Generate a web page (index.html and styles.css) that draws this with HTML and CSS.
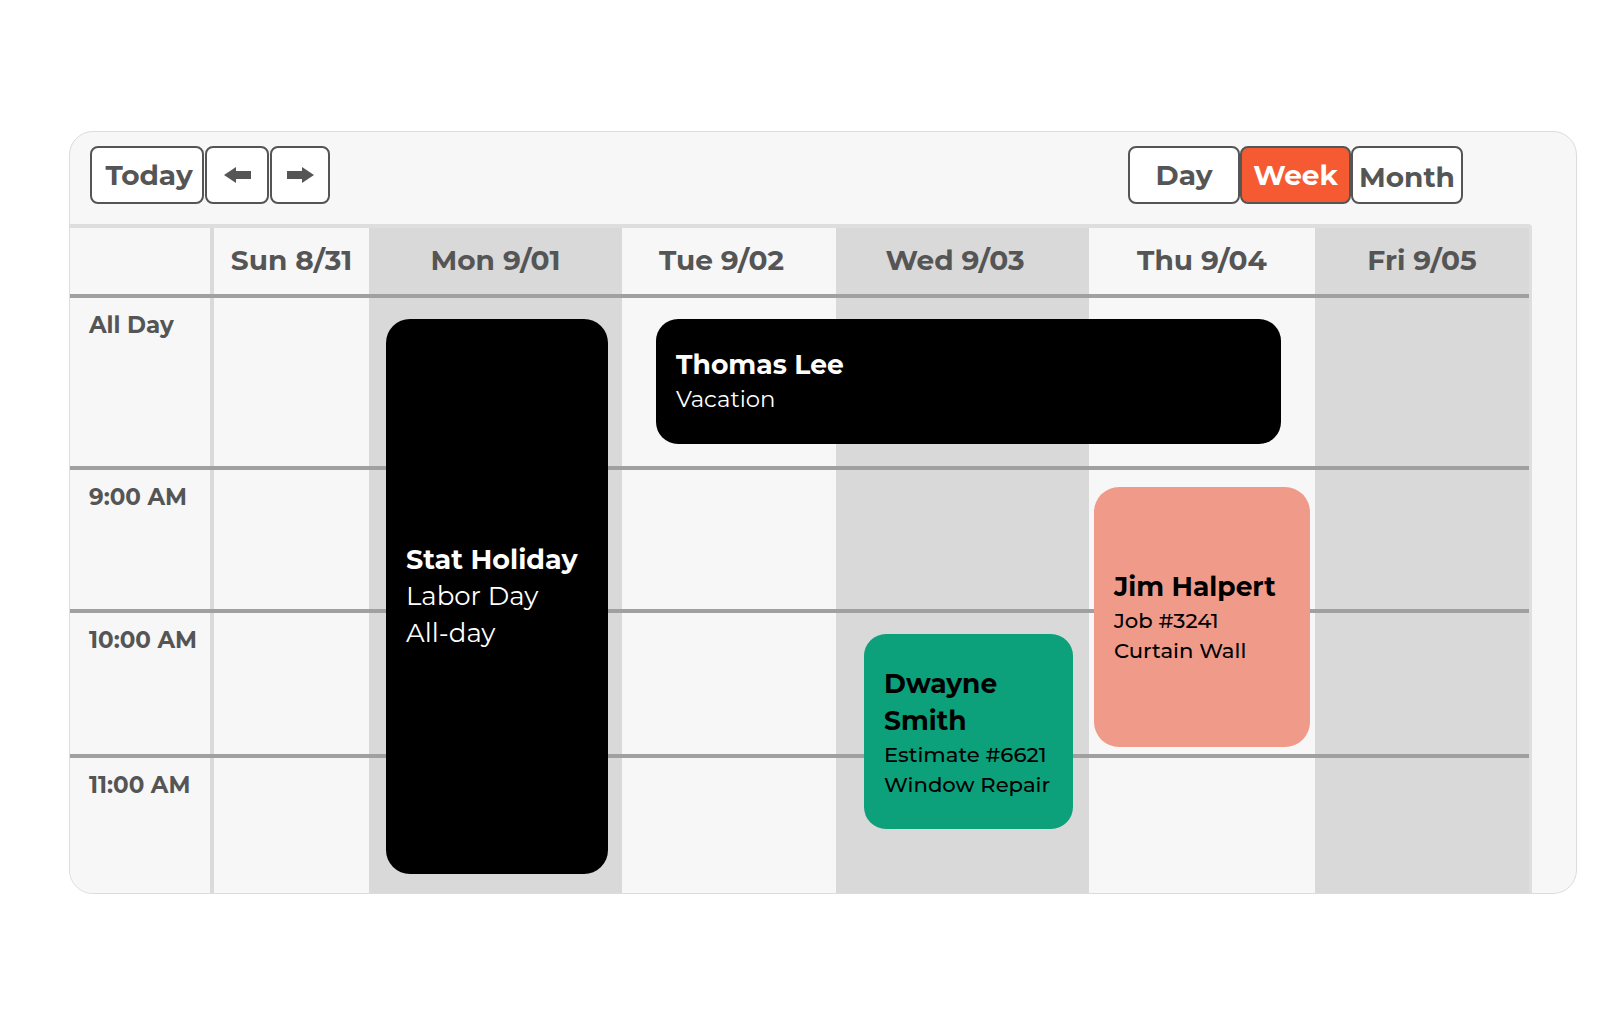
FILE: index.html
```html
<!DOCTYPE html>
<html lang="en">
<head>
    <meta charset="UTF-8">
    <meta name="viewport" content="width=device-width, initial-scale=1.0">
    <title>Week Schedule</title>
    <link rel="stylesheet" href="styles.css">
</head>
<body>
    <div class="calendar">
        <div class="toolbar">
            <div class="btn-group">
                <button type="button" class="btn btn-today">Today</button>
                <button type="button" class="btn btn-prev" aria-label="Previous week">
                    <svg width="27" height="16" viewBox="0 0 27 16"><polygon points="0,8 12,0 12,4 27,4 27,12 12,12 12,16" fill="#555"/></svg>
                </button>
                <button type="button" class="btn btn-next" aria-label="Next week">
                    <svg width="27" height="16" viewBox="0 0 27 16"><polygon points="27,8 15,0 15,4 0,4 0,12 15,12 15,16" fill="#555"/></svg>
                </button>
            </div>
            <div class="btn-group">
                <button type="button" class="btn btn-view">Day</button>
                <button type="button" class="btn btn-view active">Week</button>
                <button type="button" class="btn btn-view btn-month">Month</button>
            </div>
        </div>

        <div class="week-grid">
            <!-- fondos de columnas -->
            <div class="col-bg" style="grid-column: 1"></div>
            <div class="col-bg divider" style="grid-column: 2"></div>
            <div class="col-bg" style="grid-column: 3"></div>
            <div class="col-bg shaded" style="grid-column: 4"></div>
            <div class="col-bg" style="grid-column: 5"></div>
            <div class="col-bg shaded" style="grid-column: 6"></div>
            <div class="col-bg" style="grid-column: 7"></div>
            <div class="col-bg shaded" style="grid-column: 8"></div>

            <!-- lineas horizontales -->
            <div class="row-line" style="grid-row: 2"></div>
            <div class="row-line" style="grid-row: 4"></div>
            <div class="row-line" style="grid-row: 6"></div>
            <div class="row-line" style="grid-row: 8"></div>

            <!-- cabecera de dias -->
            <div class="day-head" style="grid-column: 3">Sun 8/31</div>
            <div class="day-head" style="grid-column: 4">Mon 9/01</div>
            <div class="day-head nudge" style="grid-column: 5">Tue 9/02</div>
            <div class="day-head nudge" style="grid-column: 6">Wed 9/03</div>
            <div class="day-head" style="grid-column: 7">Thu 9/04</div>
            <div class="day-head" style="grid-column: 8">Fri 9/05</div>

            <!-- horas -->
            <div class="time-label" style="grid-row: 3">All Day</div>
            <div class="time-label" style="grid-row: 5">9:00 AM</div>
            <div class="time-label" style="grid-row: 7">10:00 AM</div>
            <div class="time-label" style="grid-row: 9">11:00 AM</div>

            <!-- eventos -->
            <div class="event event-holiday">
                <div class="event-title">Stat Holiday</div>
                <div class="event-detail">Labor Day</div>
                <div class="event-detail">All-day</div>
            </div>
            <div class="event event-vacation">
                <div class="event-title">Thomas Lee</div>
                <div class="event-detail">Vacation</div>
            </div>
            <div class="event event-job">
                <div class="event-title">Jim Halpert</div>
                <div class="event-detail">Job #3241</div>
                <div class="event-detail">Curtain Wall</div>
            </div>
            <div class="event event-estimate">
                <div class="event-title">Dwayne Smith</div>
                <div class="event-detail">Estimate #6621</div>
                <div class="event-detail">Window Repair</div>
            </div>
        </div>
    </div>
</body>
</html>
```

FILE: styles.css
```css
body {
    font-family: "Montserrat", Inter, "Open Sans", sans-serif;
    margin: 0;
    padding: 0;
    background-color: #fff;
    color: #555;
}
.calendar {
    box-sizing: border-box;
    width: 1508px;
    height: 763px;
    margin: 131px 0 0 69px;
    background: #f7f7f7;
    border: 1px solid #dcdcdc;
    border-radius: 24px;
    overflow: hidden;
}
.toolbar {
    box-sizing: border-box;
    height: 92px;
    padding: 14px 113px 0 20px;
    display: flex;
    justify-content: space-between;
    align-items: flex-start;
}
.btn-group {
    display: flex;
    gap: 1px;
}
.btn-group:last-child {
    gap: 0;
}
.btn {
    height: 58px;
    padding: 0;
    border: 2px solid #555;
    border-radius: 8px;
    background-color: #fff;
    color: #555;
    font-family: inherit;
    font-size: 28px;
    font-weight: 700;
    display: flex;
    align-items: center;
    justify-content: center;
    cursor: pointer;
}
.btn-today {
    width: 114px;
    padding-left: 4px;
}
.btn-prev {
    width: 64px;
}
.btn-next {
    width: 60px;
}
.btn-view {
    width: 112px;
}
.btn-view.active {
    width: 111px;
    background-color: #f65a32;
    color: #fff;
}
.btn-month {
    padding-top: 4px;
}

/* rejilla de la semana */
.week-grid {
    display: grid;
    grid-template-columns: 140px 4px 155px 253px 214px 253px 226px 214px;
    grid-template-rows: 66px 4px 168px 4px 139px 4px 141px 4px 1fr;
    width: 1459px;
    height: 665px;
    border-top: 4px solid #dedede;
    border-right: 3px solid #dedede;
    border-top-right-radius: 4px;
}
.col-bg {
    grid-row: 1 / -1;
    background: #f7f7f7;
}
.col-bg.shaded {
    background: #d9d9d9;
}
.col-bg.divider {
    background: #dadada;
}
.row-line {
    grid-column: 1 / -1;
    background: #a0a0a0;
}
.day-head {
    grid-row: 1;
    display: flex;
    align-items: center;
    justify-content: center;
    padding-bottom: 2px;
    font-size: 28px;
    font-weight: 700;
    color: #555;
}
.day-head.nudge {
    padding-right: 15px;
}
.time-label {
    grid-column: 1;
    padding: 13px 0 0 19px;
    font-size: 23px;
    line-height: 28px;
    font-weight: 700;
    color: #555;
}

/* eventos */
.event {
    display: flex;
    flex-direction: column;
    justify-content: center;
    padding: 0 20px;
    border-radius: 22px;
    color: #000;
}
.event-title {
    font-size: 26.5px;
    line-height: 36px;
    font-weight: 700;
}
.event-detail {
    font-size: 21.2px;
    line-height: 30px;
    font-weight: 500;
}
.event-holiday {
    grid-column: 4 / 5;
    grid-row: 3 / 10;
    margin: 21px 14px 19px 17px;
    background: #000;
    color: #fff;
    border-radius: 24px;
}
.event-holiday .event-title {
    font-size: 27px;
    line-height: 37px;
}
.event-holiday .event-detail {
    font-size: 26px;
    line-height: 37px;
    font-weight: 400;
}
.event-vacation {
    grid-column: 5 / 8;
    grid-row: 3 / 4;
    margin: 21px 34px 22px 34px;
    background: #000;
    color: #fff;
}
.event-vacation .event-title {
    font-size: 26.6px;
    line-height: 34px;
}
.event-vacation .event-detail {
    font-size: 22.8px;
    line-height: 34px;
    font-weight: 400;
}
.event-job {
    grid-column: 7 / 8;
    grid-row: 5 / 8;
    margin: 17px 5px 7px 5px;
    background: #f09a8a;
    border-radius: 25px;
}
.event-estimate {
    grid-column: 6 / 7;
    grid-row: 7 / 10;
    margin: 21px 16px 64px 28px;
    padding: 0 19px 0 20px;
    background: #0ca07b;
}
.event-estimate .event-title {
    line-height: 37px;
}
```
